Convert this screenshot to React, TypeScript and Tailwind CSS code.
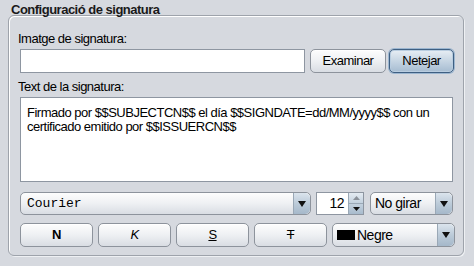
import React from "react";

const btn =
  "flex items-center justify-center h-[24px] rounded-[5px] border border-[#8d939c] bg-gradient-to-b from-[#fdfdfd] via-[#eef0f3] to-[#d9dde3] text-[13px] text-black shadow-[inset_0_1px_0_#ffffff]";

function Arrow() {
  return (
    <div className="flex items-center justify-center w-[17px] h-full rounded-r-[5px] border-l border-[#9aa8b6] bg-gradient-to-b from-[#dbe4ed] via-[#bccbd9] to-[#a5b8ca]">
      <svg width="8" height="6" viewBox="0 0 8 6">
        <path d="M0 0 L8 0 L4 6 Z" fill="#111" />
      </svg>
    </div>
  );
}

export default function App() {
  return (
    <div
      className="w-[474px] h-[266px] bg-[#d6d9df] text-black overflow-hidden tracking-[-0.5px]"
      style={{ fontFamily: '"Liberation Sans", Arial, sans-serif' }}
    >
      <div className="pl-[11px] pt-[2px] text-[13px] leading-[15px] font-bold text-[#1a1a1a]">
        Configuració de signatura
      </div>
      <div className="ml-[8px] mt-[-2px] w-[456px] h-[241px] rounded-[6px] border border-[#9ea3ab] shadow-[inset_1px_1px_0_#ffffff,1px_1px_0_#eef0f3] pl-[11px] pt-[15px]">
        <div className="ml-[-2px] text-[13px] leading-[15px]">Imatge de signatura:</div>
        <div className="flex mt-[3px] h-[24px]">
          <div className="w-[285px] h-[24px] bg-white border border-[#8e96a1]" />
          <div className={btn + " ml-[5px] w-[76px]"}>Examinar</div>
          <div className="ml-[3px] w-[65px] h-[24px] flex items-center justify-center rounded-[5px] border border-[#3e5f82] bg-gradient-to-b from-[#e8eef4] via-[#c6d5e3] to-[#a6bcd1] text-[13px] shadow-[inset_0_0_0_1px_#b9cde0,0_0_0_1px_#9cb6d0]">
            Netejar
          </div>
        </div>
        <div className="ml-[-2px] mt-[6px] text-[13px] leading-[15px]">Text de la signatura:</div>
        <div className="mt-[3px] w-[433px] h-[85px] bg-white border border-[#8e96a1] pl-[6px] pt-[8px] text-[13px] leading-[14px] whitespace-nowrap">
          Firmado por $$SUBJECTCN$$ el día $$SIGNDATE=dd/MM/yyyy$$ con un
          <br />
          certificado emitido por $$ISSUERCN$$
        </div>
        <div className="flex mt-[10px] h-[23px]">
          <div className="w-[291px] h-[23px] flex rounded-[5px] border border-[#8d939c] bg-gradient-to-b from-[#fdfdfd] via-[#eef0f3] to-[#d9dde3] overflow-hidden">
            <div
              className="flex-1 flex items-center pl-[6px] text-[13px] tracking-normal"
              style={{ fontFamily: '"Liberation Mono", "Courier New", monospace' }}
            >
              Courier
            </div>
            <Arrow />
          </div>
          <div className="ml-[5px] w-[48px] h-[23px] flex border border-[#8e96a1] bg-white">
            <div className="flex-1 flex items-center justify-end pr-[4px] text-[14px]">12</div>
            <div className="w-[15px] flex flex-col border-l border-[#9aa8b6]">
              <div className="flex-1 flex items-center justify-center bg-gradient-to-b from-[#e4ebf2] to-[#c3d1de] border-b border-[#9aa8b6]">
                <svg width="7" height="4" viewBox="0 0 7 4">
                  <path d="M0 4 L7 4 L3.5 0 Z" fill="#8a9099" />
                </svg>
              </div>
              <div className="flex-1 flex items-center justify-center bg-gradient-to-b from-[#c3d1de] to-[#a8bbcd]">
                <svg width="7" height="4" viewBox="0 0 7 4">
                  <path d="M0 0 L7 0 L3.5 4 Z" fill="#111" />
                </svg>
              </div>
            </div>
          </div>
          <div className="ml-[6px] w-[83px] h-[23px] flex rounded-[5px] border border-[#8d939c] bg-gradient-to-b from-[#fdfdfd] via-[#eef0f3] to-[#d9dde3] overflow-hidden">
            <div className="flex-1 flex items-center pl-[4px] text-[14px]">No girar</div>
            <Arrow />
          </div>
        </div>
        <div className="flex mt-[8px] h-[24px]">
          <div className={btn + " w-[73px] font-bold"}>N</div>
          <div className={btn + " ml-[5px] w-[73px] italic"}>K</div>
          <div className={btn + " ml-[5px] w-[73px] underline"}>S</div>
          <div className={btn + " ml-[5px] w-[73px] line-through"}>T</div>
          <div className="ml-[5px] w-[123px] h-[24px] flex rounded-[5px] border border-[#8d939c] bg-gradient-to-b from-[#fdfdfd] via-[#eef0f3] to-[#d9dde3] overflow-hidden">
            <div className="flex-1 flex items-center pl-[4px] text-[14px]">
              <span className="inline-block w-[18px] h-[10px] bg-black mr-[2px]" />
              Negre
            </div>
            <Arrow />
          </div>
        </div>
      </div>
    </div>
  );
}
